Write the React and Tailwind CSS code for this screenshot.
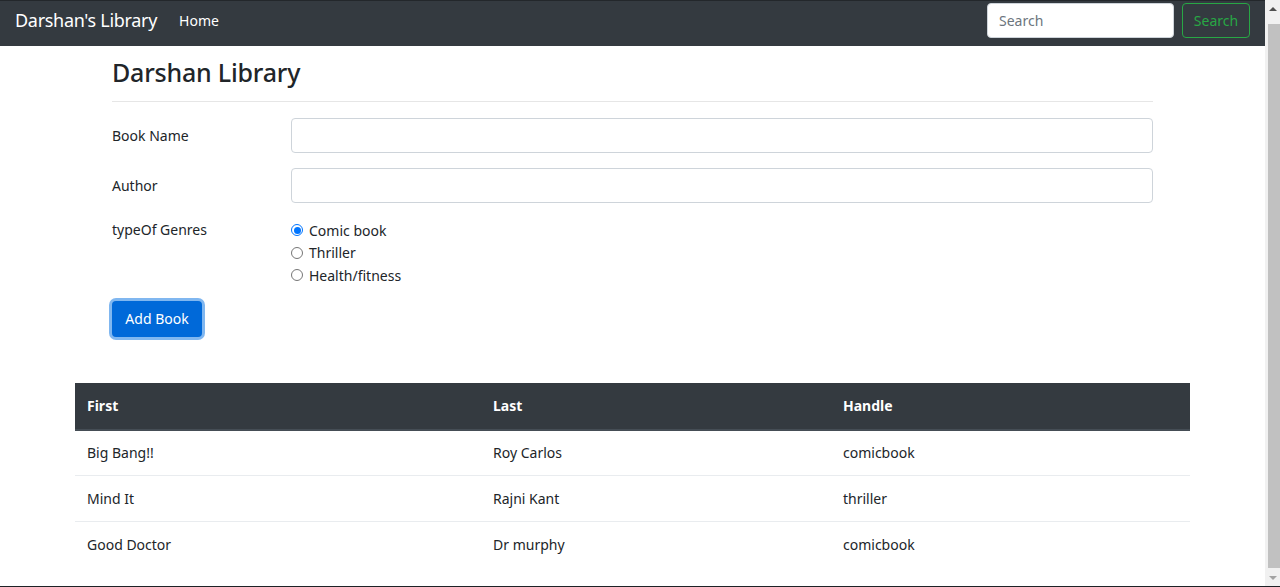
import React, { useState } from 'react';

const font = { fontFamily: '"Noto Sans", "Open Sans", sans-serif' };

const books = [
  { name: 'Big Bang!!', author: 'Roy Carlos', type: 'comicbook' },
  { name: 'Mind It', author: 'Rajni Kant', type: 'thriller' },
  { name: 'Good Doctor', author: 'Dr murphy', type: 'comicbook' },
];

const genres = ['Comic book', 'Thriller', 'Health/fitness'];

const Navbar = () => (
  <nav className="h-[46px] bg-[#343a40] border-t border-[#23272b] flex items-start pt-[2px] px-[15px]">
    <div className="h-[35px] flex items-center flex-1">
      <span className="text-[18px] text-white mr-[22px] tracking-[-0.3px]">Darshan's Library</span>
      <span className="text-[14px] text-white">Home</span>
    </div>
    <div className="flex items-center gap-[8px]">
      <input
        placeholder="Search"
        className="w-[187px] h-[35px] rounded-[4px] bg-white border border-[#ced4da] px-[11px] text-[14px] text-[#495057] placeholder:text-[#6c757d] outline-none"
      />
      <button className="w-[68px] h-[35px] rounded-[4px] border border-[#28a745] text-[#28a745] text-[14px]">
        Search
      </button>
    </div>
  </nav>
);

const Scrollbar = () => (
  <div className="w-[15px] bg-[#f1f1f1] flex flex-col items-center">
    <div className="h-[18px] w-full flex items-center justify-center">
      <div className="w-0 h-0 border-l-[4px] border-r-[4px] border-b-[4px] border-l-transparent border-r-transparent border-b-[#505050]" />
    </div>
    <div className="flex-1 w-[12px] ml-[2px] bg-[#c1c1c1] mt-[6px] mb-[2px]" />
    <div className="h-[16px] w-full flex items-center justify-center">
      <div className="w-0 h-0 border-l-[4px] border-r-[4px] border-t-[4px] border-l-transparent border-r-transparent border-t-[#a3a3a3]" />
    </div>
  </div>
);

export default function App() {
  const [genre, setGenre] = useState('Comic book');

  return (
    <div className="w-[1280px] h-[587px] flex overflow-hidden bg-white border-b border-[#1e2226]" style={font}>
      <div className="flex-1 flex flex-col">
        <Navbar />

        <div className="w-[1041px] mx-auto text-[#212529]">
          <h2 className="text-[25px] font-medium leading-none mt-[14px] mb-0 tracking-[-0.2px]">Darshan Library</h2>
          <div className="h-px bg-[#e6e6e6] mt-[16px]" />

          <div className="flex items-center mt-[16px] h-[35px]">
            <label className="w-[179px] text-[14px]">Book Name</label>
            <input className="flex-1 h-[35px] rounded-[4px] border border-[#ced4da] outline-none" />
          </div>

          <div className="flex items-center mt-[15px] h-[35px]">
            <label className="w-[179px] text-[14px]">Author</label>
            <input className="flex-1 h-[35px] rounded-[4px] border border-[#ced4da] outline-none" />
          </div>

          <div className="flex mt-[16px]">
            <div className="w-[179px] text-[14px] leading-[22px]">typeOf Genres</div>
            <div className="flex flex-col">
              {genres.map((g) => (
                <label key={g} className="flex items-center h-[22.5px] text-[14px] cursor-pointer">
                  <span
                    className={
                      'w-[12px] h-[12px] rounded-full border flex items-center justify-center mr-[6px] ' +
                      (genre === g ? 'border-[#0075ff]' : 'border-[#767676]')
                    }
                    onClick={() => setGenre(g)}
                  >
                    {genre === g && <span className="w-[7px] h-[7px] rounded-full bg-[#0075ff]" />}
                  </span>
                  {g}
                </label>
              ))}
            </div>
          </div>

          <button className="mt-[14px] w-[90px] h-[36px] rounded-[4px] bg-[#0069d9] text-white text-[14px] ring-[3px] ring-[#80b7f0]">
            Add Book
          </button>
        </div>

        <table className="w-[1115px] mx-auto mt-[46px] text-[14px] text-[#212529] border-collapse">
          <thead>
            <tr className="bg-[#343a40] text-white h-[47px] border-b-2 border-[#454d55]">
              <th className="w-[406px] text-left font-bold px-[12px]">First</th>
              <th className="w-[350px] text-left font-bold px-[12px]">Last</th>
              <th className="text-left font-bold px-[12px]">Handle</th>
            </tr>
          </thead>
          <tbody>
            {books.map((b, i) => (
              <tr key={b.name} className={'h-[46px] ' + (i < books.length - 1 ? 'border-b border-[#e9ecef]' : '')}>
                <td className="px-[12px]">{b.name}</td>
                <td className="px-[12px]">{b.author}</td>
                <td className="px-[12px]">{b.type}</td>
              </tr>
            ))}
          </tbody>
        </table>
      </div>
      <Scrollbar />
    </div>
  );
}
